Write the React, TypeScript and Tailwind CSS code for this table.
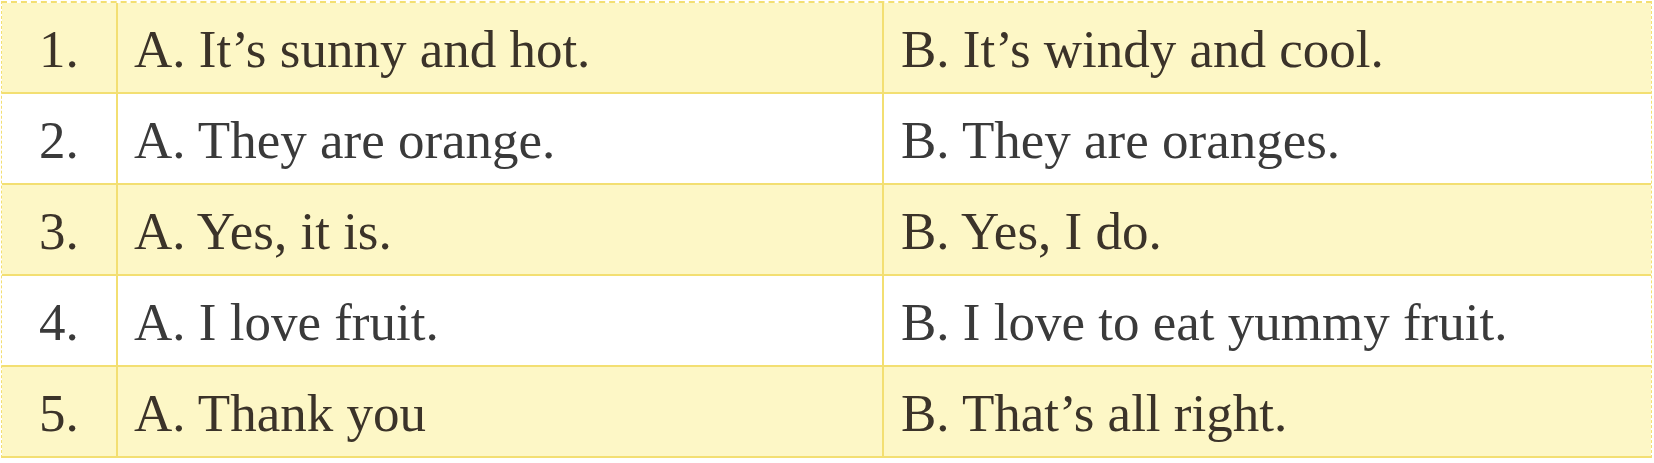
import React from 'react';

const rows = [
  { n: '1.', a: 'A. It’s sunny and hot.', b: 'B. It’s windy and cool.', shaded: true },
  { n: '2.', a: 'A. They are orange.', b: 'B. They are oranges.', shaded: false },
  { n: '3.', a: 'A. Yes, it is.', b: 'B. Yes, I do.', shaded: true },
  { n: '4.', a: 'A. I love fruit.', b: 'B. I love to eat yummy fruit.', shaded: false },
  { n: '5.', a: 'A. Thank you', b: 'B. That’s all right.', shaded: true },
];

const App: React.FC = () => {
  return (
    <div className="w-[1654px] h-[463px] bg-white pt-[1px] pl-[1px]">
      <div
        className="w-[1651px] border-t-2 border-t-[#f3df72] border-x border-dashed border-x-[#f3df72] text-[53px] leading-none"
        style={{ fontFamily: '"Liberation Serif", "Times New Roman", serif' }}
      >
        {rows.map(row => (
          <div
            key={row.n}
            className={`flex h-[91px] border-b-2 border-[#f3df72] ${row.shaded ? 'bg-[#fdf7c6] text-[#3b3329]' : 'bg-white text-[#3a3a3a]'}`}
          >
            <div className="w-[116px] shrink-0 border-r-2 border-[#f3df72] flex items-center pl-[37px] pt-[3px]">
              {row.n}
            </div>
            <div className="w-[766px] shrink-0 border-r-2 border-[#f3df72] flex items-center pl-[16px] pt-[3px]">
              {row.a}
            </div>
            <div className="flex-1 flex items-center pl-[17px] pt-[3px]">
              {row.b}
            </div>
          </div>
        ))}
      </div>
    </div>
  );
};

export default App;
